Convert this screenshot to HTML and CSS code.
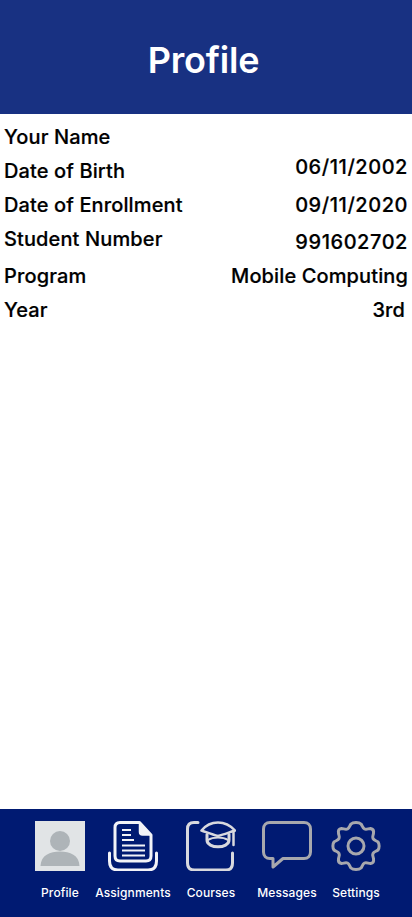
FILE: index.html
```html
<!DOCTYPE html>
<html lang="en">
<head>
<meta charset="utf-8">
<title>Profile</title>
<link rel="stylesheet" href="styles.css">
</head>
<body>
<div class="screen">
  <header class="header"><h1 class="title">Profile</h1></header>
  <main class="details">
    <div class="row r1"><span>Your Name</span></div>
    <div class="row r2"><span>Date of Birth</span><span class="num up4">06/11/2002</span></div>
    <div class="row r3"><span>Date of Enrollment</span><span class="num">09/11/2020</span></div>
    <div class="row r4"><span>Student Number</span><span class="num down3">991602702</span></div>
    <div class="row r5"><span>Program</span><span>Mobile Computing</span></div>
    <div class="row r6"><span>Year</span><span class="year">3rd</span></div>
  </main>
  <nav class="nav">
    <div class="item i1">
      <svg class="icon" width="50" height="50" viewBox="0 0 50 50"><rect width="50" height="50" fill="#e1e4e6"/><circle cx="25" cy="20" r="10" fill="#aeb4b8"/><path d="M5.500 45C6 34 15 30.500 25 30.500S44 34 44.500 45Z" fill="#aeb4b8"/></svg>
      <span class="label">Profile</span>
    </div>
    <div class="item i2">
      <svg class="icon" width="50" height="50" viewBox="0 0 50 50" fill="none" stroke="#f2f3f8"><path d="M1.500 32V40C1.500 46 4.500 49 10 49H40C45.500 49 48.500 46 48.500 40V32" stroke-width="3" stroke-linecap="round"/><path d="M12 40C8.500 40 7 38 7 35V6.500C7 3 9 1.500 12 1.500H31.500L43 14V35C43 38 41.500 40 38 40Z" stroke-width="3" stroke-linejoin="round"/><path d="M31.500 2V11C31.500 13 32.500 14 34.500 14H43L31.500 2Z" fill="#f2f3f8" stroke-width="1.500" stroke-linejoin="round"/><path d="M14 9H23M14 14H23M14 19H26M14 24.500H37M14 29.500H37M14 34.500H37" stroke-width="2"/></svg>
      <span class="label">Assignments</span>
    </div>
    <div class="item i3">
      <svg class="icon" width="50" height="50" viewBox="0 0 50 50" fill="none" stroke="#d8d9de" stroke-width="3" stroke-linecap="round" stroke-linejoin="round"><path d="M12 1.500H8C3.500 1.500 1.500 4 1.500 8V42C1.500 46.500 4 49 8.500 49H40C44 49 46.500 46.500 46.500 42V32"/><path d="M15.500 9.500C20 4 26 1.500 32 1.500C38 1.500 44 4 49 9.500C44 11 38 13.500 32 15C26 13.500 20 11 15.500 9.500Z" stroke-width="2.500"/><path d="M21 13.500V19C21 28 43 28 43 19V13.500"/><path d="M22 19C27 15.500 37 15.500 42 19" stroke-width="2"/><path d="M47.500 10V24" stroke-width="2.500"/></svg>
      <span class="label">Courses</span>
    </div>
    <div class="item i4">
      <svg class="icon" width="50" height="50" viewBox="0 0 50 50" fill="none" stroke="#a7a8ad" stroke-width="3"><path d="M8 1.500H42C46 1.500 48.500 4 48.500 8V31C48.500 35 46 37.500 42 37.500H21L11 46V37.500H8C4 37.500 1.500 35 1.500 31V8C1.500 4 4 1.500 8 1.500Z" stroke-linejoin="round"/></svg>
      <span class="label">Messages</span>
    </div>
    <div class="item i5">
      <svg class="icon" width="50" height="50" viewBox="0 0 50 50" fill="none" stroke="#a7a8ad" stroke-width="3" stroke-linejoin="round"><circle cx="25" cy="25" r="8"/><path d="M20 3C22 1 28 1 30 3C31.500 5 31.500 7 33.500 8C35.500 9 37.500 7.500 39.500 7.500C42 8 43 9.500 42.500 12C42.500 14 41 15.500 42 17.500C43 19.500 45 19.500 47 21C48.500 23 48.500 27 47 29C45 30.500 43 30.500 42 32.500C41 34.500 42.500 36 42.500 38C43 40.500 42 42 39.500 42.500C37.500 42.500 35.500 41 33.500 42C31.500 43 31.500 45 30 47C28 49 22 49 20 47C18.500 45 18.500 43 16.500 42C14.500 41 12.500 42.500 10.500 42.500C8 42 7 40.500 7.500 38C7.500 36 9 34.500 8 32.500C7 30.500 5 30.500 3 29C1.500 27 1.500 23 3 21C5 19.500 7 19.500 8 17.500C9 15.500 7.500 14 7.500 12C7 9.500 8 8 10.500 7.500C12.500 7.500 14.500 9 16.500 8C18.500 7 18.500 5 20 3Z"/></svg>
      <span class="label">Settings</span>
    </div>
  </nav>
</div>
</body>
</html>
```

FILE: styles.css
```css
* { box-sizing: border-box; margin: 0; padding: 0; }
html, body { background: #fff; }
.screen {
  width: 412px;
  height: 917px;
  display: flex;
  flex-direction: column;
  font-family: Inter, "Liberation Sans", sans-serif;
  overflow: hidden;
}
.header {
  height: 114px;
  background: #183182;
  display: flex;
  justify-content: center;
  padding-top: 38px;
  padding-right: 5px;
}
.title { color: #fff; font-size: 36px; line-height: 44px; font-weight: 600; letter-spacing: -0.2px; }
.details {
  flex: 1;
  display: flex;
  flex-direction: column;
  padding: 11px 4px 0;
  color: #000;
  font-size: 20px;
  line-height: 24px;
  font-weight: 500;
  letter-spacing: 0.12px;
  -webkit-text-stroke: 0.2px #000;
}
.row { display: flex; justify-content: space-between; height: 24px; }
.r2 { margin-top: 10px; }
.r3 { margin-top: 10px; }
.r4 { margin-top: 10px; }
.r5 { margin-top: 13px; }
.r6 { margin-top: 10px; }
.num { letter-spacing: 0.55px; }
.up4 { margin-top: -4px; }
.down3 { margin-top: 3px; }
.year { padding-right: 3px; }
.nav {
  height: 108px;
  background: #001a72;
  display: flex;
  padding-top: 12px;
}
.item { position: relative; display: flex; flex-direction: column; align-items: center; width: 50px; }
.i1 { margin-left: 35px; }
.i2 { margin-left: 23px; }
.i3 { margin-left: 28px; }
.i4 { margin-left: 26px; }
.i5 { margin-left: 19px; }
.icon { display: block; flex: none; }
.label {
  margin-top: 14px;
  color: #fff;
  font-size: 12px;
  line-height: 15px;
  font-weight: 500;
  letter-spacing: 0.12px;
  white-space: nowrap;
}
```
